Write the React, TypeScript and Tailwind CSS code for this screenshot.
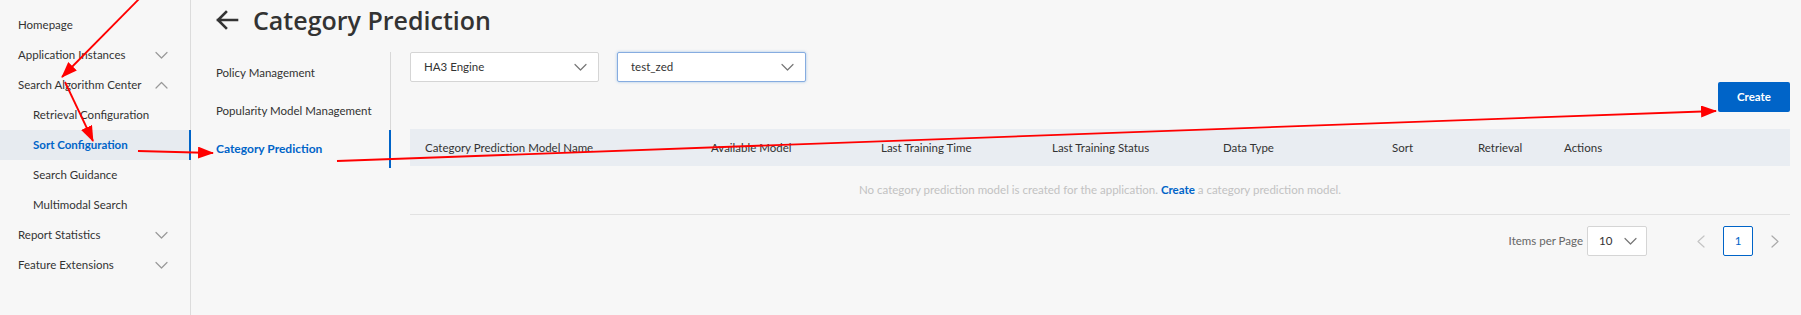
import React from 'react';

const BLUE = '#0064c8';

function Chevron({ up = false, className = '' }: { up?: boolean; className?: string }) {
  return (
    <svg width="13" height="8" viewBox="0 0 13 8" className={className} fill="none">
      <polyline
        points={up ? '1,7 6.5,1.5 12,7' : '1,1.5 6.5,7 12,1.5'}
        stroke="currentColor"
        strokeWidth="1.2"
        strokeLinecap="round"
        strokeLinejoin="round"
      />
    </svg>
  );
}

function Pager({ dir, className = '' }: { dir: 'prev' | 'next'; className?: string }) {
  return (
    <svg width="8" height="13" viewBox="0 0 8 13" className={className} fill="none">
      <polyline
        points={dir === 'prev' ? '7,1 1,6.5 7,12' : '1,1 7,6.5 1,12'}
        stroke="currentColor"
        strokeWidth="1.2"
        strokeLinecap="round"
        strokeLinejoin="round"
      />
    </svg>
  );
}

type NavItem = { label: string; level: 1 | 2; chevron?: 'up' | 'down'; active?: boolean };

const SIDEBAR: NavItem[] = [
  { label: 'Homepage', level: 1 },
  { label: 'Application Instances', level: 1, chevron: 'down' },
  { label: 'Search Algorithm Center', level: 1, chevron: 'up' },
  { label: 'Retrieval Configuration', level: 2 },
  { label: 'Sort Configuration', level: 2, active: true },
  { label: 'Search Guidance', level: 2 },
  { label: 'Multimodal Search', level: 2 },
  { label: 'Report Statistics', level: 1, chevron: 'down' },
  { label: 'Feature Extensions', level: 1, chevron: 'down' },
];

const SUBNAV = [
  { label: 'Policy Management' },
  { label: 'Popularity Model Management' },
  { label: 'Category Prediction', active: true },
];

const COLUMNS = [
  'Category Prediction Model Name',
  'Available Model',
  'Last Training Time',
  'Last Training Status',
  'Data Type',
  'Sort',
  'Retrieval',
  'Actions',
];

function Sidebar() {
  return (
    <aside className="w-[191px] shrink-0 border-r border-[#dcdcdc] pt-[10px]">
      {SIDEBAR.map((item) => (
        <div
          key={item.label}
          className={`flex h-[30px] items-center justify-between pr-[22px] ${
            item.level === 1 ? 'pl-[18px]' : 'pl-[33px]'
          } ${item.active ? 'bg-[#e7ebf0] border-r-2 border-[#0064c8] -mr-px font-bold text-[#0064c8]' : 'text-[#333]'}`}
        >
          <span>{item.label}</span>
          {item.chevron && <Chevron up={item.chevron === 'up'} className="text-[#999]" />}
        </div>
      ))}
    </aside>
  );
}

function Select({ value, width, focused = false }: { value: string; width: string; focused?: boolean }) {
  return (
    <div
      className={`flex h-[30px] items-center justify-between rounded-[2px] bg-white pl-[13px] pr-[11px] text-[#333] ${width} ${
        focused ? 'border border-[#86ace0] shadow-[0_0_3px_rgba(0,100,200,0.35)]' : 'border border-[#d5d5d5]'
      }`}
    >
      <span>{value}</span>
      <Chevron className="text-[#777]" />
    </div>
  );
}

export default function App() {
  return (
    <div className="relative flex min-h-[315px] w-full bg-[#f7f7f7] font-['Lato','Liberation_Sans',sans-serif] text-[11.5px]">
      <Sidebar />

      <main className="flex-1 pl-[24px] pr-[11px]">
        {/* Title */}
        <div className="flex h-[40px] items-center gap-[14px]">
          <svg width="24" height="20" viewBox="0 0 24 20" fill="none" className="text-[#333]">
            <path d="M22 10H3M11 2L3 10l8 8" stroke="currentColor" strokeWidth="2.6" strokeLinecap="square" />
          </svg>
          <h1 className="font-['Open_Sans','Liberation_Sans',sans-serif] text-[25px] font-semibold leading-none text-[#333]">
            Category Prediction
          </h1>
        </div>

        <div className="mt-[12px] flex">
          {/* Sub navigation */}
          <nav className="h-[116px] w-[176px] shrink-0 border-r border-[#d8d8d8] pt-[2px]">
            {SUBNAV.map((s) => (
              <div
                key={s.label}
                className={`-mr-px flex h-[38px] items-center pl-[1px] ${
                  s.active ? 'border-r-2 border-[#0064c8] font-bold text-[#0064c8] text-[12px]' : 'text-[#333]'
                }`}
              >
                {s.label}
              </div>
            ))}
          </nav>

          {/* Content */}
          <section className="ml-[19px] flex-1">
            <div className="flex gap-[18px]">
              <Select value="HA3 Engine" width="w-[189px]" />
              <Select value="test_zed" width="w-[189px]" focused />
            </div>

            <div className="flex justify-end">
              <button className="h-[30px] w-[72px] rounded-[2px] bg-[#0064c8] font-bold text-white">Create</button>
            </div>

            <div className="mt-[17px]">
              <div className="grid h-[37px] grid-cols-[286px_170px_171px_171px_169px_86px_86px_1fr] items-center bg-[#e9edf2] pl-[15px] text-[#333]">
                {COLUMNS.map((c) => (
                  <div key={c}>{c}</div>
                ))}
              </div>
              <div className="flex h-[49px] items-center justify-center border-b border-[#e2e2e2] text-[#c2c2c2]">
                No category prediction model is created for the application.&nbsp;
                <span className="font-bold" style={{ color: BLUE }}>Create</span>
                &nbsp;a category prediction model.
              </div>
            </div>

            <div className="mt-[11px] flex items-center justify-end pr-[11px]">
              <span className="text-[#666]">Items per Page</span>
              <div className="ml-[4px] flex h-[30px] w-[60px] items-center justify-between rounded-[2px] border border-[#d5d5d5] bg-white pl-[11px] pr-[9px] text-[#333]">
                <span>10</span>
                <Chevron className="text-[#777]" />
              </div>
              <Pager dir="prev" className="ml-[50px] text-[#c4c4c4]" />
              <div className="ml-[18px] flex h-[30px] w-[30px] items-center justify-center rounded-[2px] border border-[#0064c8] bg-white text-[#0064c8]">
                1
              </div>
              <Pager dir="next" className="ml-[18px] text-[#aaa]" />
            </div>
          </section>
        </div>
      </main>

      {/* Red annotation arrows drawn over the screenshot */}
      <svg
        className="pointer-events-none absolute left-0 top-0"
        width="1801"
        height="315"
        viewBox="0 0 1801 315"
      >
        <defs>
          <marker id="head" markerUnits="userSpaceOnUse" markerWidth="16" markerHeight="12" refX="15" refY="6" orient="auto">
            <path d="M0,0 L16,6 L0,12 z" fill="#f00" />
          </marker>
        </defs>
        <g stroke="#f00" strokeWidth="1.8" fill="none">
          <line x1="140" y1="-2" x2="62" y2="77" markerEnd="url(#head)" />
          <line x1="65" y1="82" x2="93" y2="141" markerEnd="url(#head)" />
          <line x1="138" y1="151" x2="213" y2="153" markerEnd="url(#head)" />
          <line x1="337" y1="161" x2="1716" y2="111" markerEnd="url(#head)" />
        </g>
      </svg>
    </div>
  );
}
